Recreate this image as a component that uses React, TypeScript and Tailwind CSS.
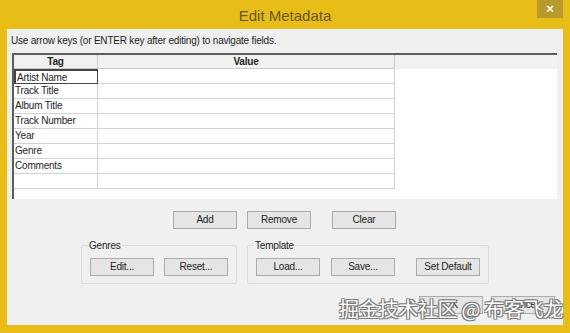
import React from "react";

const tags = ["Artist Name", "Track Title", "Album Title", "Track Number", "Year", "Genre", "Comments", ""];

const Btn: React.FC<{ label: string; className?: string }> = ({ label, className = "" }) => (
  <button
    className={`h-[18px] w-[64px] border border-[#acacac] bg-[#e5e5e5] text-[10px] leading-none tracking-[-0.2px] text-[#222] ${className}`}
  >
    {label}
  </button>
);

export default function App() {
  return (
    <div
      className="relative flex h-[333px] w-[570px] flex-col bg-[#e8bd17] text-[10px] tracking-[-0.2px] text-[#1e1e1e]"
      style={{ fontFamily: '"Liberation Sans", Arial, sans-serif' }}
    >
      {/* title bar */}
      <div className="flex h-[29px] items-start">
        <div className="w-[33px]" />
        <div className="flex-1 pt-[5px] text-center text-[15px] tracking-normal text-[#685619]">Edit Metadata</div>
        <div className="mr-[7px] flex h-[18px] w-[26px] items-center justify-center bg-[#b89a2c] text-[13px] font-bold text-white">
          ×
        </div>
      </div>

      {/* client area */}
      <div className="mx-[7px] mb-[8px] flex flex-1 flex-col bg-[#f0f0f0]">
        <div className="h-[24px] pl-[4px] pt-[4px]">Use arrow keys (or ENTER key after editing) to navigate fields.</div>

        {/* grid */}
        <div className="ml-[5px] mr-[6px] h-[146px] border-l-2 border-t-2 border-[#5c5c5c] bg-white">
          <div className="flex h-[14px] bg-[#f1f1f1]">
            <div className="w-[84px] border-b border-r border-[#c8c8c8] text-center font-bold leading-[14px]">Tag</div>
            <div className="w-[297px] border-b border-r border-[#c8c8c8] text-center font-bold leading-[14px]">Value</div>
            <div className="flex-1" />
          </div>
          {tags.map((t, i) => (
            <div key={i} className="flex h-[15px]">
              <div
                className={`w-[84px] border-r border-b pl-[1px] leading-[13px] ${
                  i === 0 ? "border-2 border-[#444]" : "border-[#d2d2d2]"
                }`}
              >
                {t}
              </div>
              <div className="w-[297px] border-b border-r border-[#d2d2d2]" />
            </div>
          ))}
        </div>

        {/* add/remove/clear */}
        <div className="mt-[12px] flex pl-[166px]">
          <Btn label="Add" />
          <Btn label="Remove" className="ml-[10px]" />
          <Btn label="Clear" className="ml-[21px]" />
        </div>

        {/* group boxes */}
        <div className="mt-[9px] flex pl-[74px]">
          <fieldset className="h-[46px] w-[156px] rounded-[2px] border border-[#dcdcdc] px-[8px]">
            <legend className="-ml-[2px] px-[1px]">Genres</legend>
            <div className="mt-[5px] flex gap-[10px]">
              <Btn label="Edit..." />
              <Btn label="Reset..." />
            </div>
          </fieldset>
          <fieldset className="ml-[10px] h-[46px] w-[241px] rounded-[2px] border border-[#dcdcdc] px-[8px]">
            <legend className="-ml-[2px] px-[1px]">Template</legend>
            <div className="mt-[5px] flex">
              <Btn label="Load..." />
              <Btn label="Save..." className="ml-[11px]" />
              <Btn label="Set Default" className="ml-[21px]" />
            </div>
          </fieldset>
        </div>

        {/* ok / cancel */}
        <div className="mt-[12px] flex pl-[412px]">
          <Btn label="OK" />
          <Btn label="Cancel" className="ml-[8px]" />
        </div>
      </div>

      {/* watermark */}
      <div
        className="absolute left-[339px] top-[298px] text-[20px] leading-[22px] tracking-[-0.3px] text-white"
        style={{
          fontFamily: '"Noto Sans CJK SC", sans-serif',
          textShadow: "1px 1px 0 #777, -1px -1px 0 #777, 1px -1px 0 #777, -1px 1px 0 #777",
        }}
      >
        掘金技术社区 @ 布客飞龙
      </div>
    </div>
  );
}
